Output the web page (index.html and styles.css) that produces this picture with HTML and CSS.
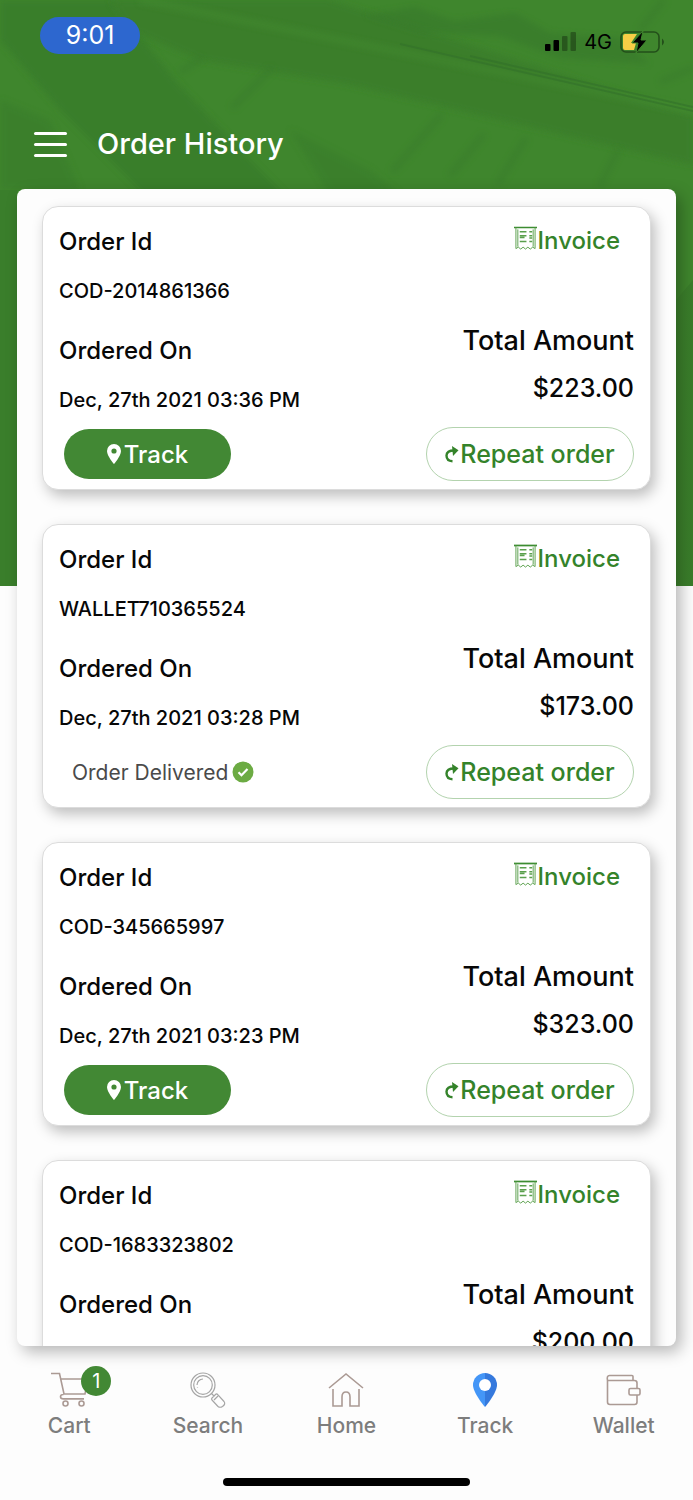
FILE: index.html
```html
<!DOCTYPE html>
<html lang="en">
<head>
<meta charset="utf-8">
<meta name="viewport" content="width=device-width, initial-scale=1">
<title>Order History</title>
<link rel="stylesheet" href="styles.css">
</head>
<body>
<svg width="0" height="0" class="sprite" aria-hidden="true">
  <symbol id="i-invoice" viewBox="0 0 24 26">
    <path d="M0 1h24" stroke="#3c8c31" stroke-width="1.800"/>
    <path d="M2 1v22l2.500-1.500 2.500 2 2.500-2 2.500 2 2.500-2 2.500 2 2.500-2L22 23V1M4 3v18M20 3v18" stroke-width="1"/>
    <path d="M6 5.500h7M16 5.500h3M6 9.500h7M16 9.500h3M6 11.500h5M6 15.500h7M16 15.500h3M16 12h3" stroke-width="1.600"/>
  </symbol>
  <symbol id="i-pin" viewBox="0 0 14 20">
    <path fill-rule="evenodd" d="M7 0a7 7 0 0 0-7 7c0 5 7 13 7 13s7-8 7-13a7 7 0 0 0-7-7zm0 4.400a2.600 2.600 0 1 1 0 5.200 2.600 2.600 0 0 1 0-5.200z" fill="currentColor"/>
  </symbol>
  <symbol id="i-repeat" viewBox="0 0 14 17">
    <path d="M7.500 15.200C3 15 1.500 12 1.500 9.500 1.500 6 4 4.500 9 4.500" stroke-width="2.400"/>
    <path d="M7 0 13.500 4.300 8 10z" fill="currentColor" stroke="none"/>
  </symbol>
</svg>
<div class="app">
  <svg class="backdrop" viewBox="0 0 693 586" preserveAspectRatio="none" aria-hidden="true">
    <defs>
      <linearGradient id="edge" x1="0" y1="0" x2="1" y2="0"><stop offset="0" stop-color="#357528" stop-opacity=".3"/><stop offset="1" stop-color="#357528"/></linearGradient>
      <filter id="soft"><feGaussianBlur stdDeviation="3"/></filter>
    </defs>
    <rect width="693" height="586" fill="#3f862d"/>
    <path d="M0 0H112L175 80 250 160 300 210H160L60 110 0 40z" fill="#397b2a" opacity=".75" filter="url(#soft)"/>
    <path d="M110 0H330L693 116V165L346 84 200 60 130 30z" fill="#3a7d2b" opacity=".8" filter="url(#soft)"/>
    <path d="M140 0 693 111" stroke="#458d32" stroke-width="5" opacity=".6" filter="url(#soft)"/>
    <path d="M400 44 693 111M470 56 693 107" stroke="#32702a" stroke-width="2" opacity=".55"/>
    <path d="M365 15l50-8 40 14 60-8 35 20 70 5 30 26-90-6-60-22-80-4z" fill="#34742a" opacity=".45" filter="url(#soft)"/>
    <path d="M392 172l50-58M450 176l34-42M498 184l28-46M600 186l18-36M180 72l22-14M232 108l40-40M640 30l24-30M660 82l33-14" stroke="#34742a" stroke-width="6" opacity=".35" filter="url(#soft)"/>
    <path d="M0 100l50 20 30 70H0zM290 130l80 40 30 25H330z" fill="#377a2a" opacity=".5" filter="url(#soft)"/>
    <path d="M0 190h17v396H0z" fill="#3a7e2b"/>
    <path d="M676 300l17-20v306h-17z" fill="url(#edge)" opacity=".6"/>
  </svg>

  <header class="top">
    <div class="status">
      <span class="clock">9:01</span>
      <span class="signals">
        <svg width="31" height="20" viewBox="0 0 31 20" aria-hidden="true"><rect x="0" y="12" width="5.500" height="7" rx="1"/><rect x="8.500" y="8" width="5.500" height="11" rx="1"/><g opacity=".3"><rect x="17" y="4" width="5.500" height="15" rx="1"/><rect x="25.500" y="0" width="5.500" height="19" rx="1"/></g></svg>
        <span>4G</span>
        <svg width="44" height="22" viewBox="0 0 44 22" aria-hidden="true"><rect x="1" y="1" width="38" height="20" rx="5" fill="none" stroke="#234f1a" stroke-width="1.600"/><path d="M42 7.500q4 3.500 0 7z" fill="#234f1a"/><path d="M5 3h12l-6 9h5l-2 7H5q-2 0-2-2V5q0-2 2-2z" fill="#f7ce46"/><path d="M23 0 12 12h6l-2 10 11-13h-6z" stroke="#3f862d" stroke-width="1" /></svg>
      </span>
    </div>
    <div class="titlebar">
      <button class="menu" aria-label="Open menu"><span></span><span></span><span></span></button>
      <h1>Order History</h1>
    </div>
  </header>

  <main class="panel">
    <article class="card">
      <dl class="facts"><dt>Order Id</dt><dd>COD-2014861366</dd><dt>Ordered On</dt><dd>Dec, 27th 2021 03:36 PM</dd></dl>
      <div class="amount">
        <a class="invoice" href="#"><svg><use href="#i-invoice"/></svg>Invoice</a>
        <p class="total">Total Amount</p><p class="price">$223.00</p>
      </div>
      <div class="state"><button class="track"><svg><use href="#i-pin"/></svg>Track</button></div>
      <button class="repeat"><svg><use href="#i-repeat"/></svg>Repeat order</button>
    </article>
    <article class="card">
      <dl class="facts"><dt>Order Id</dt><dd>WALLET710365524</dd><dt>Ordered On</dt><dd>Dec, 27th 2021 03:28 PM</dd></dl>
      <div class="amount">
        <a class="invoice" href="#"><svg><use href="#i-invoice"/></svg>Invoice</a>
        <p class="total">Total Amount</p><p class="price">$173.00</p>
      </div>
      <div class="state"><span class="delivered">Order Delivered<svg viewBox="0 0 22 22" aria-hidden="true"><circle cx="11" cy="11" r="10.500" fill="#6cab43"/><path d="M6.500 11.200l3 3L15.500 8" fill="none" stroke="#fff" stroke-width="2.200"/></svg></span></div>
      <button class="repeat"><svg><use href="#i-repeat"/></svg>Repeat order</button>
    </article>
    <article class="card">
      <dl class="facts"><dt>Order Id</dt><dd>COD-345665997</dd><dt>Ordered On</dt><dd>Dec, 27th 2021 03:23 PM</dd></dl>
      <div class="amount">
        <a class="invoice" href="#"><svg><use href="#i-invoice"/></svg>Invoice</a>
        <p class="total">Total Amount</p><p class="price">$323.00</p>
      </div>
      <div class="state"><button class="track"><svg><use href="#i-pin"/></svg>Track</button></div>
      <button class="repeat"><svg><use href="#i-repeat"/></svg>Repeat order</button>
    </article>
    <article class="card">
      <dl class="facts"><dt>Order Id</dt><dd>COD-1683323802</dd><dt>Ordered On</dt><dd>Dec, 27th 2021</dd></dl>
      <div class="amount">
        <a class="invoice" href="#"><svg><use href="#i-invoice"/></svg>Invoice</a>
        <p class="total">Total Amount</p><p class="price">$200.00</p>
      </div>
    </article>
  </main>

  <nav class="tabs">
    <a href="#"><span class="icon"><svg viewBox="0 0 36 36"><path d="M0 1.500h8.500L13 22h21L37 7H9.600M12.500 22.500q-3 0-3 2.200t3 2.200H33"/><circle cx="14.500" cy="31.500" r="2.500"/><circle cx="30.500" cy="31.500" r="2.500"/></svg><b class="badge">1</b></span>Cart</a>
    <a href="#"><span class="icon"><svg class="grey" viewBox="0 0 36 36"><circle cx="13" cy="13" r="12"/><circle cx="13" cy="13" r="9.300"/><path d="M7 13a6 6 0 0 1 6-6M7.500 15v.6M21.500 21.500l3 3M22 26l4-4M24 28l4-4M22 26q-1 1 0 2l6 6.500q2 1.500 4.500 0 3.500-2.500 1.500-5L28 23q-1-1.500-2-1"/></svg></span>Search</a>
    <a href="#"><span class="icon"><svg viewBox="0 0 36 36"><path d="M1 16 18 2l17 14M5 17v17h9V25q0-5 4-5t4 5v9h9V17"/></svg></span>Home</a>
    <a href="#"><span class="icon"><svg viewBox="0 0 36 36"><path d="M18 1A12 12 0 0 0 6 13c0 8 12 22 12 22z" fill="#4496f7" stroke="none"/><path d="M18 1a12 12 0 0 1 12 12c0 8-12 22-12 22z" fill="#3579dd" stroke="none"/><circle cx="18" cy="13" r="6" fill="#fff" stroke="none"/></svg></span>Track</a>
    <a href="#"><span class="icon"><svg viewBox="0 0 36 36"><path d="M31 16V11q0-2.500-2.500-2.500H1.500M1.500 8.500q-1-5 2-5H26q1 0 1 1v4M1.500 8v22q0 2.500 2.500 2.500h24.500q2.500 0 2.500-2.500v-7"/><rect x="23" y="16.500" width="11" height="6.500" rx="1.500"/></svg></span>Wallet</a>
  </nav>
  <div class="home-bar"></div>
</div>
</body>
</html>
```
FILE: styles.css
```css
* { box-sizing: border-box; }
body, h1, p, dl, dd { margin: 0; }
body {
  font-family: Inter, "Liberation Sans", sans-serif;
  font-weight: 500;
  color: #070707;
  background: #fdfdfd;
}
button { font: inherit; border: 0; padding: 0; cursor: pointer; }
a { text-decoration: none; }
svg { flex: none; }
.sprite { position: absolute; }

.app {
  position: relative;
  isolation: isolate;
  display: flex;
  flex-direction: column;
  height: 100vh;
  overflow: hidden;
}
.backdrop {
  position: absolute;
  z-index: -1;
  top: 0;
  left: 0;
  width: 100%;
  height: 586px;
}

.status {
  display: flex;
  justify-content: space-between;
  padding: 17px 29px 0 40px;
}
.clock {
  width: 100px;
  line-height: 37px;
  border-radius: 19px;
  background: #2d67cf;
  color: #fff;
  font-size: 25px;
  font-weight: 400;
  text-align: center;
}
.signals {
  display: flex;
  align-items: center;
  gap: 8px;
  padding-top: 13px;
  font-size: 20px;
  font-weight: 400;
  color: #000;
}
.titlebar {
  display: flex;
  align-items: center;
  gap: 30px;
  padding: 72px 34px 27px;
}
.menu {
  display: grid;
  gap: 8px;
  width: 33px;
  background: none;
}
.menu span { height: 3px; border-radius: 2px; background: #fff; }
h1 { font-size: 29px; line-height: 36px; font-weight: 500; color: #fff; }

.panel {
  flex: 1;
  min-height: 0;
  overflow: hidden;
  display: flex;
  flex-direction: column;
  gap: 34px;
  margin: 0 17px;
  padding: 17px 25px;
  border-radius: 8px;
  background: #fdfdfd;
  box-shadow: 5px 6px 16px rgba(0, 0, 0, .28);
}
.card {
  flex: none;
  display: grid;
  grid-template-columns: 1fr auto;
  row-gap: 12px;
  padding: 18px 16px 8px;
  border: 1px solid #dcdcdc;
  border-radius: 16px;
  background: #fff;
  box-shadow: 4px 6px 14px rgba(0, 0, 0, .25);
}
.facts { padding-top: 2px; }
.facts dt { font-size: 24px; line-height: 30px; }
.facts dd { margin: 19px 0 30px; font-size: 20px; line-height: 30px; }
.facts dd:last-child { margin-bottom: 0; }
.amount {
  display: flex;
  flex-direction: column;
  align-items: flex-end;
  padding-top: 1px;
  font-size: 25px;
  line-height: 30px;
}
.invoice {
  display: flex;
  gap: 1px;
  margin: 0 14px 70px 0;
  font-size: 24px;
  color: #34832a;
}
.invoice svg {
  width: 23px;
  height: 26px;
  fill: none;
  stroke: #5aa04c;
}
.total { font-size: 27px; }
.price { margin-top: 17px; }

.state { display: flex; align-items: center; padding-left: 5px; }
.track {
  display: flex;
  align-items: center;
  justify-content: center;
  gap: 3px;
  width: 167px;
  height: 50px;
  border-radius: 25px;
  background: #428834;
  color: #fff;
  font-size: 24px;
}
.track svg { width: 14px; height: 20px; }
.repeat {
  display: flex;
  align-items: center;
  justify-content: center;
  gap: 1px;
  justify-self: end;
  width: 208px;
  height: 54px;
  border: 1px solid #b3d3ae;
  border-radius: 27px;
  background: #fff;
  color: #34832a;
  font-size: 25px;
}
.repeat svg {
  width: 14px;
  height: 17px;
  fill: none;
  stroke: currentColor;
}
.delivered {
  display: flex;
  align-items: center;
  gap: 4px;
  padding-left: 8px;
  font-size: 21px;
  font-weight: 400;
  color: #4a4a4a;
}
.delivered svg { width: 22px; height: 22px; }

.tabs {
  display: grid;
  grid-template-columns: repeat(5, 1fr);
  padding: 26px 0 38px;
}
.tabs a {
  display: flex;
  flex-direction: column;
  align-items: center;
  gap: 4px;
  font-size: 21px;
  line-height: 28px;
  color: #7d7d7d;
}
.icon { position: relative; width: 36px; height: 36px; }
.icon svg {
  display: block;
  width: 36px;
  height: 36px;
  overflow: visible;
  fill: none;
  stroke: #ab9a94;
  stroke-width: 1.6;
}
.icon .grey { stroke: #a5a5a5; stroke-width: 1.2; }
.badge {
  position: absolute;
  top: -6px;
  left: 30px;
  width: 30px;
  height: 30px;
  border-radius: 50%;
  background: #428834;
  color: #fff;
  font-size: 20px;
  font-weight: 400;
  line-height: 30px;
  text-align: center;
}
.home-bar {
  align-self: center;
  width: 247px;
  height: 8px;
  margin-bottom: 14px;
  border-radius: 4px;
  background: #000;
}
```
